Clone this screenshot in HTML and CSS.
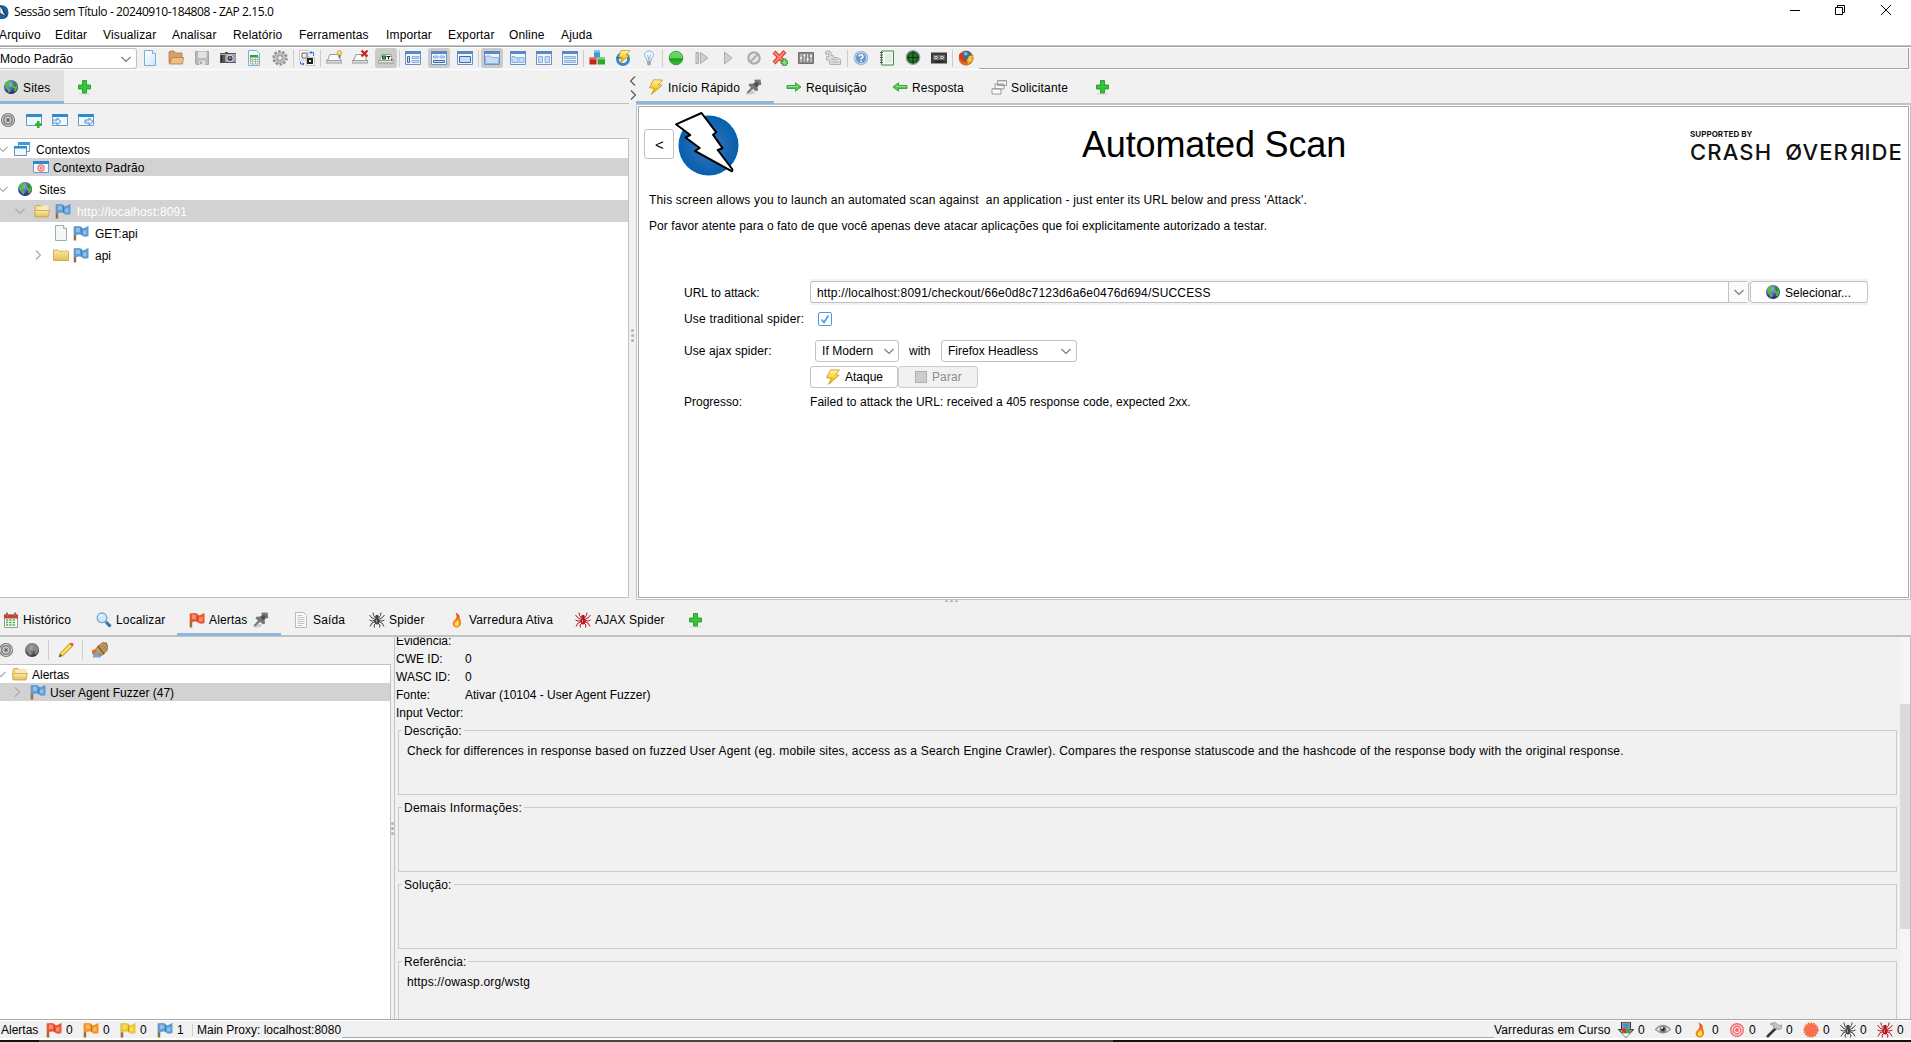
FILE: index.html
```html
<!DOCTYPE html>
<html lang="pt-BR">
<head>
<meta charset="utf-8">
<title>Sessão sem Título - 20240910-184808 - ZAP 2.15.0</title>
<link rel="stylesheet" href="styles.css">
</head>
<body>
<svg class="defs" aria-hidden="true">
  <defs>
    <linearGradient id="gBolt" x1="0" y1="0" x2="0" y2="1"><stop offset="0" stop-color="#fff6b0"/><stop offset=".5" stop-color="#fbd22e"/><stop offset="1" stop-color="#e0a000"/></linearGradient>
    <linearGradient id="gGreen" x1="0" y1="0" x2="0" y2="1"><stop offset="0" stop-color="#6fd96f"/><stop offset=".5" stop-color="#5bd35b"/><stop offset=".55" stop-color="#1f9a1f"/><stop offset="1" stop-color="#3cbf3c"/></linearGradient>
    <linearGradient id="gFolder" x1="0" y1="0" x2="0" y2="1"><stop offset="0" stop-color="#fbeaa8"/><stop offset="1" stop-color="#e6bd55"/></linearGradient>
    <linearGradient id="gPage" x1="0" y1="0" x2="1" y2="1"><stop offset="0" stop-color="#fff"/><stop offset="1" stop-color="#cfe5fa"/></linearGradient>
    <linearGradient id="gFlame" x1="0" y1="0" x2="0" y2="1"><stop offset="0" stop-color="#e8391b"/><stop offset=".6" stop-color="#f88c1c"/><stop offset="1" stop-color="#ef7a10"/></linearGradient>
    <radialGradient id="gGlobe" cx=".4" cy=".3" r=".7"><stop offset="0" stop-color="#a8b0f4"/><stop offset=".6" stop-color="#4a4fb4"/><stop offset="1" stop-color="#23236e"/></radialGradient>
    <radialGradient id="gGray" cx=".4" cy=".3" r=".7"><stop offset="0" stop-color="#bbb"/><stop offset=".6" stop-color="#666"/><stop offset="1" stop-color="#333"/></radialGradient>
    <radialGradient id="gLogo" cx=".5" cy=".5" r=".5"><stop offset="0" stop-color="#3e74bb"/><stop offset="1" stop-color="#0560ae"/></radialGradient>
  </defs>
  <symbol id="globe" viewBox="0 0 16 16"><circle cx="8" cy="8" r="7" fill="url(#gGlobe)"/><path d="M2 5Q4 1.5 7.5 1.2L8 3 6.5 4 7 6 4.5 7.5 6 9.5 8 10.5 7 13 5.5 13.5Q5 10 2.5 9ZM9.5 2Q14 3.5 14.6 7.5L13 12 11 12.5 11.5 9.5 9 8 9.5 5.5 11.5 5Z" fill="#4ec13c"/><path d="M10 2.500Q13.500 4 14 7L12 8 10.500 6.500Z" fill="#2d8f28"/></symbol>
  <symbol id="globegray" viewBox="0 0 16 16"><circle cx="8" cy="8" r="7" fill="url(#gGray)"/><path d="M2 5Q4 1.500 7.500 1.200L8 3 6.500 4 7 6 4.500 7.500 6 9.500 8 10.500 7 13 5.500 13.500Q5 10 2.500 9ZM9.500 2Q14 3.500 14.600 7.500L13 12 11 12.500 11.500 9.500 9 8 9.500 5.500Z" fill="#8a8a8a"/></symbol>
  <symbol id="plus" viewBox="0 0 16 16"><path d="M3 15h11" stroke="#cfcfcf"/><path d="M6.500 1.500h4v4.500h4v4h-4v4h-4v-4h-4v-4h4z" fill="#35c435" stroke="#139520" stroke-width=".8"/></symbol>
  <symbol id="bolt" viewBox="0 0 16 16"><path d="M5.500 .8L14.500 1 10.500 5.800 14.200 6.200 3.500 15.300 6.500 9.300 1.600 8.800Z" fill="url(#gBolt)" stroke="#c98f10" stroke-width=".8"/></symbol>
  <symbol id="pin" viewBox="0 0 16 16"><path d="M0 15.500L1 12h7l1 2-4 1.500Z" fill="#ccc"/><path d="M8 .8l6.500-.3.8 5.500-2 .3-1.800 1.700.7 3.500-2.200.8-3-2.300-4.500 4-1.500.2.300-1.500L5 8.500 2.500 6.500 3.300 4.800l4-.3L9 2.800Z" fill="#777"/><path d="M7.500 5.500l3-2.500 2.200 1.200-2 4Z" fill="#4c4c4c"/></symbol>
  <symbol id="right" viewBox="0 0 16 16"><path d="M1 6.500h8.500V3.800L15 8l-5.500 4.200V9.500H1z" fill="#50c650" stroke="#289828" stroke-width=".8"/><path d="M2 7.500h10" stroke="#9ae89a" stroke-width=".8"/></symbol>
  <symbol id="left" viewBox="0 0 16 16"><path d="M15 6.500H6.500V3.800L1 8l5.500 4.200V9.500H15z" fill="#50c650" stroke="#289828" stroke-width=".8"/><path d="M4 7.500h10" stroke="#9ae89a" stroke-width=".8"/></symbol>
  <symbol id="stack" viewBox="0 0 16 16"><g fill="#fafafa" stroke="#9a9a9a"><path d="M6.500 1.500h9v5h-9zM4 5h9v5H4zM1 9.500h9v5.500H1z"/></g><path d="M6.500 2h9M4 5.500h9M1 10h9" stroke="#aaa"/></symbol>
  <symbol id="target" viewBox="0 0 16 16"><circle cx="8" cy="8" r="7" fill="#777"/><circle cx="8" cy="8" r="5.500" fill="#777" stroke="#ddd"/><circle cx="8" cy="8" r="3.200" fill="#999" stroke="#e4e4e4"/><circle cx="8" cy="8" r="1" fill="#555"/></symbol>
  <symbol id="targetred" viewBox="0 0 16 16"><circle cx="8" cy="8" r="7" fill="#ef6d70"/><circle cx="8" cy="8" r="5" fill="none" stroke="#ffd5d5" stroke-width="1.200"/><circle cx="8" cy="8" r="2.500" fill="none" stroke="#ffe5e5" stroke-width="1.200"/></symbol>
  <symbol id="win" viewBox="0 0 16 16"><path d="M.5 2.500h15v11H.5z" fill="#f0f7fd" stroke="#6a9cc8"/><path d="M0 2h16v3H0z" fill="#2d8bd0"/></symbol>
  <symbol id="winadd" viewBox="0 0 16 16"><use href="#win"/><path d="M11 9h2.500v2.200H16v2.600h-2.500V16H11v-2.200H9v-2.600h2z" fill="#2eb135"/></symbol>
  <symbol id="winin" viewBox="0 0 16 16"><use href="#win"/><path d="M1 8h4V6l4 3.500L5 13v-2H1" fill="#d7ebfb" stroke="#5990bd"/></symbol>
  <symbol id="winout" viewBox="0 0 16 16"><use href="#win"/><path d="M7 8h4V6l4 3.500L11 13v-2H7z" fill="#d7ebfb" stroke="#5990bd"/></symbol>
  <symbol id="wins" viewBox="0 0 16 16"><path d="M4.500 1.500h11v9h-11z" fill="#fff" stroke="#65a0d0"/><path d="M4 1h12v3H4z" fill="#3b9add"/><path d="M.5 5.500h12v9H.5z" fill="#f3f8fc" stroke="#6d91b1"/><path d="M0 5h13v2.500H0z" fill="#2d8bd0"/></symbol>
  <symbol id="context" viewBox="0 0 16 16"><use href="#win"/><circle cx="8" cy="9" r="3.700" fill="#f27779"/><circle cx="8" cy="9" r="2" fill="none" stroke="#ffe3e3"/></symbol>
  <symbol id="folderopen" viewBox="0 0 16 16"><path d="M1 14V3.500L2 2.500h4L7 4h7v4" fill="#f5dc8b" stroke="#c89a3c" stroke-width=".8"/><path d="M10 2.500h4.500V8H4V4.500Z" fill="#f8e9bb"/><path d="M.5 7.500h15L14 14H1.500z" fill="url(#gFolder)" stroke="#cba040" stroke-width=".8"/></symbol>
  <symbol id="folder" viewBox="0 0 16 16"><path d="M.5 13.500V3h5L7 4.500h8.500v9z" fill="url(#gFolder)" stroke="#cba040" stroke-width=".8"/><path d="M8 3h6v1.500H9z" fill="#fff" stroke="#d9bc72" stroke-width=".5"/></symbol>
  <symbol id="flagshape" viewBox="0 0 16 16"><path d="M.7 1.500h2.500V15.500H.7z" fill="#9b6b3e"/><path d="M1 1.800Q5 .2 8 1.500L9 3Q12 3.500 13 2L15.500 1V11Q12 12.500 9.500 11L8.500 9.800Q5 9 2.500 10.500H1Z" fill="currentColor"/><path d="M3 3Q5 2 7 3.500V7Q5 6.500 3 7.500ZM10 5.500Q12 6 13.500 4.500V9Q12 10 10 9Z" fill="#fff" opacity=".35"/><path d="M8 1.500l1 1.500v8L8 9.500Z" opacity=".2"/></symbol>
  <symbol id="page" viewBox="0 0 16 16"><path d="M2.500 .5h8L13.500 3.500v12h-11z" fill="url(#gPage)" stroke="#79aede"/><path d="M10.500.5v3h3" fill="#fff" stroke="#79aede"/></symbol>
  <symbol id="pagegray" viewBox="0 0 16 16"><path d="M2.500 .5h8L13.500 3.500v12h-11z" fill="#f4f9f7" stroke="#9eb0ac"/><path d="M10.500.5v3h3" fill="#fff" stroke="#9eb0ac"/></symbol>
  <symbol id="pagetext" viewBox="0 0 16 16"><path d="M2.500 .5h8L13.500 3.500v12h-11z" fill="#fafafa" stroke="#bbb"/><path d="M4.500 3.500h5M4.500 5.500h7M4.500 7.500h7M4.500 9.500h7M4.500 11.500h7M4.500 13.500h5" stroke="#c4c4c4"/></symbol>
  <symbol id="open" viewBox="0 0 16 16"><path d="M1 13V2.500L2 1h4l1.500 2H14v9" fill="#d9a066" stroke="#a87a4a" stroke-width=".8"/><path d="M1.500 14L4 7.500h11.500L14.500 14z" fill="#edbd88" stroke="#b07a42" stroke-width=".8"/></symbol>
  <symbol id="save" viewBox="0 0 16 16"><path d="M1.500 1.500h13v13h-12l-1-1z" fill="#b9b9b9" stroke="#a5a5a5"/><path d="M4 1.500h8.500V8H4z" fill="#e2e2e2"/><path d="M5 10.500h6.500V15H5z" fill="#dedede"/><path d="M6 11.500h2V14H6z" fill="#aaa"/></symbol>
  <symbol id="camera" viewBox="0 0 16 16"><path d="M0 3h5V2h3v1h8v10H0z" fill="#555"/><path d="M0 4.500h16" stroke="#aaa"/><path d="M5 5h11v7H5z" fill="#9c9c9c"/><circle cx="10" cy="8.300" r="3.600" fill="#ddd"/><circle cx="10" cy="8.300" r="2.600" fill="#35406d"/><circle cx="10" cy="8" r="1" fill="#9ab"/><path d="M1.500 5v7" stroke="#222"/></symbol>
  <symbol id="sheet" viewBox="0 0 16 16"><path d="M2.500 .5h8L13.500 3.500v12h-11z" fill="#f8fbff" stroke="#79aede"/><path d="M4.500 6h7.500v8H4.500z" fill="#fff" stroke="#8aa88a" stroke-width=".8"/><path d="M4 5h8v2.500H4z" fill="#2fa42f"/><path d="M4 9.500h8M4 11.500h8M6.500 7v7M9.500 7v7" stroke="#93b593" stroke-width=".8"/></symbol>
  <symbol id="gear" viewBox="0 0 16 16"><circle cx="8" cy="8" r="6.600" fill="none" stroke="#8e8e8e" stroke-width="2.200" stroke-dasharray="2.500 1.650"/><circle cx="8" cy="8" r="4.200" fill="none" stroke="#8a8a8a" stroke-width="3"/><circle cx="8" cy="8" r="4.200" fill="none" stroke="#d0d0d0" stroke-width="1.600"/><circle cx="8" cy="8" r="2.300" fill="#f1f1f1" stroke="#888" stroke-width=".8"/></symbol>
  <symbol id="swap" viewBox="0 0 16 16"><path d="M.5.500h8.500v9.500H.5z" fill="#fff" stroke="#999" stroke-dasharray="1 1"/><path d="M3 3h5v5H3z" fill="#eee" stroke="#666"/><path d="M7.500 7.500h8v8h-8z" fill="#fff" stroke="#999" stroke-dasharray="1 1"/><path d="M8 8h6v6H8z" fill="#222"/><path d="M10 10h2v2h-2z" fill="#ddd"/><path d="M11 2.500h3.500V6M1.500 11.500V14H5M12.500 1L11 2.500 12.500 4M3.500 12.500L5 14 3.500 15.500" fill="none" stroke="#2a6de0"/></symbol>
  <symbol id="tray" viewBox="0 0 16 16"><path d="M1.500 10.500L4 4.500h9l1.500 6" fill="#fafafa" stroke="#999"/><path d="M0 10.500h16V13H0z" fill="#e0e0e0" stroke="#888" stroke-width=".8"/></symbol>
  <symbol id="traybulb" viewBox="0 0 16 16"><use href="#tray"/><circle cx="13.500" cy="3" r="2.500" fill="#f4d56e" stroke="#b99b33" stroke-width=".6"/><path d="M12.500 5h2v3h-2z" fill="#777"/></symbol>
  <symbol id="trayx" viewBox="0 0 16 16"><use href="#tray"/><path d="M9.500.5l6 6M15.500.5l-6 6" stroke="#cf2020" stroke-width="2.200"/></symbol>
  <symbol id="traytext" viewBox="0 0 16 16"><use href="#tray"/><path d="M4 5.500h4v4H4z" fill="#115a11"/><path d="M5 6.500h2v2H5z" fill="#22d022"/><path d="M8.500 6.500h4M10.500 6v3.500M13 9.500h1" stroke="#222" stroke-width="1.200"/></symbol>
  <symbol id="frame" viewBox="0 0 16 16"><path d="M.5 1.500h15v13H.5z" fill="#f1f6fd" stroke="#6d93c6"/><path d="M0 1h16v3H0z" fill="#5c88c8"/></symbol>
  <symbol id="lay1" viewBox="0 0 16 16"><use href="#frame"/><path d="M2.500 6.500h2v6h-2z" fill="#c6dcf7" stroke="#3e6cab"/><path d="M7 6.500h7v2H7zM7 10.500h7v2H7z" fill="#c6dcf7" stroke="#8eb2df"/></symbol>
  <symbol id="lay2" viewBox="0 0 16 16"><use href="#frame"/><path d="M2.500 6h4.500v2h-4.500zM9 6h4.500v2H9z" fill="#c6dcf7" stroke="#8eb2df"/><path d="M2.500 10.500h11v2h-11z" fill="#c6dcf7" stroke="#3e6cab"/></symbol>
  <symbol id="lay3" viewBox="0 0 16 16"><use href="#frame"/><path d="M2.500 6.500h11v6h-11z" fill="#c6dcf7" stroke="#3e6cab"/></symbol>
  <symbol id="lay4" viewBox="0 0 16 16"><use href="#frame"/><path d="M1.500 6h5l1 1.500h7v6h-13z" fill="#c6dcf7" stroke="#8eb2df"/></symbol>
  <symbol id="lay5" viewBox="0 0 16 16"><use href="#frame"/><path d="M2 6.500h3v1h3v5H2zM9 7.500h5v5H9z" fill="#c6dcf7" stroke="#8eb2df"/></symbol>
  <symbol id="lay6" viewBox="0 0 16 16"><use href="#frame"/><path d="M2.500 6.500h4v6h-4zM9 6.500h4.500v6H9z" fill="#c6dcf7" stroke="#8eb2df"/></symbol>
  <symbol id="lay7" viewBox="0 0 16 16"><use href="#frame"/><path d="M2.500 6.500h11v2h-11zM2.500 10.500h11v2h-11z" fill="#c6dcf7" stroke="#8eb2df"/></symbol>
  <symbol id="cubes" viewBox="0 0 16 16"><path d="M5 .500h6v7H5z" fill="#3d9ada"/><path d="M5 .500h6v2H5z" fill="#7cc4f0"/><path d="M.5 7.500h7v7h-7z" fill="#c92222"/><path d="M.5 7.500h7v2h-7z" fill="#ee6a6a"/><path d="M8.500 7.500H16v7H8.500z" fill="#30a52f"/><path d="M8.500 7.500H16v2H8.500z" fill="#7fd67c"/></symbol>
  <symbol id="update" viewBox="0 0 16 16"><circle cx="8" cy="9" r="5.500" fill="none" stroke="#3a86c8" stroke-width="3"/><path d="M1 8l3-3 3 4Z" fill="#2a6fb3"/><path d="M6 .5h9l-4 4.500 3.500.5L5 13l2.500-5.500L3.500 7Z" fill="url(#gBolt)" stroke="#c98f10" stroke-width=".7"/></symbol>
  <symbol id="bulb" viewBox="0 0 16 16"><path d="M6 11Q6 9 4.500 7.500 3 5.500 3.700 3.500 5 .8 8 .8T12.300 3.500Q13 5.500 11.500 7.500 10 9 10 11Z" fill="#eaf5ff" stroke="#85b5e0"/><path d="M6 11h4v3.500L8.500 15.500h-1L6 14.500z" fill="#aaa"/><path d="M6.500 5l1.500 5 1.500-5" fill="none" stroke="#9bc"/></symbol>
  <symbol id="greenball" viewBox="0 0 16 16"><circle cx="8" cy="8" r="6.800" fill="url(#gGreen)" stroke="#2c8f2c" stroke-width=".8"/></symbol>
  <symbol id="step" viewBox="0 0 16 16"><path d="M2 2.500h2.500v11H2zM6.500 2.500L14 8l-7.500 5.500z" fill="#cfcfcf" stroke="#ababab"/></symbol>
  <symbol id="play" viewBox="0 0 16 16"><path d="M4.500 2L12 8l-7.500 6z" fill="#cfcfcf" stroke="#ababab"/></symbol>
  <symbol id="drop" viewBox="0 0 16 16"><circle cx="8" cy="8" r="5.700" fill="#e6e6e6" stroke="#adadad" stroke-width="2.200"/><path d="M4.500 11.500l7-7" stroke="#adadad" stroke-width="2"/></symbol>
  <symbol id="breakadd" viewBox="0 0 16 16"><path d="M2 2l10.500 10.500M13 1.500L2 13" stroke="#d8372a" stroke-width="4"/><path d="M2.500 2.500l9.500 9.500M12.500 2L2.500 12.500" stroke="#ff8671" stroke-width="2"/><path d="M11 9h3v2.200H16v2.600h-2V16h-3v-2.200H9v-2.600h2z" fill="#7fe36e" stroke="#147c18" stroke-width=".8"/></symbol>
  <symbol id="mixer" viewBox="0 0 16 16"><path d="M.5 2.500h15v11H.5z" fill="#8a8a8a" stroke="#6f6f6f"/><path d="M3 4v8M6.300 4v8M9.600 4v8M13 4v8" stroke="#ddd"/><path d="M2 8h2M5.300 5.500h2M8.600 9.500h2M12 6h2" stroke="#fff" stroke-width="1.500"/></symbol>
  <symbol id="hand" viewBox="0 0 16 16"><path d="M0 3.500Q0 .8 3 .8T6 3V5.500H8.500V7.500h4L15.500 9.500v5H5l-1-4.500H1.500V6.500H3.500V3.500H1.500V5Z" fill="#dcdcdc" stroke="#b0b0b0"/><path d="M6 9.500h6M6.500 12h7" stroke="#b5b5b5"/></symbol>
  <symbol id="help" viewBox="0 0 16 16"><circle cx="8" cy="8" r="6.700" fill="#6a94cc" stroke="#a9bedb" stroke-width="1.200"/><circle cx="8" cy="8" r="5.500" fill="none" stroke="#dfeaf8" stroke-width=".8"/><path d="M6 6.500Q6.200 4.700 8 4.700t2 1.700Q10 7.400 8.200 8.500V9.500" fill="none" stroke="#fff" stroke-width="1.500"/><circle cx="8.100" cy="11.300" r=".9" fill="#fff"/></symbol>
  <symbol id="note" viewBox="0 0 16 16"><path d="M2.500 1h12v14h-12z" fill="#f4fbf4" stroke="#3c8f4a"/><path d="M6 4h7M6 6h7M6 8h7M6 10h7M6 12h7" stroke="#cde3cd"/><path d="M1 2.500h3M1 5h3M1 7.500h3M1 10h3M1 12.500h3" stroke="#555"/></symbol>
  <symbol id="radar" viewBox="0 0 16 16"><circle cx="8" cy="7.500" r="6.700" fill="#164e1b" stroke="#999" stroke-width="1.400"/><circle cx="8" cy="7.500" r="4.500" fill="#1f7a28"/><path d="M8 1.500v12M2 7.500h12" stroke="#0c2c0e"/></symbol>
  <symbol id="tape" viewBox="0 0 16 16"><path d="M0 2.500h16v11H0z" fill="#3c3c3c"/><path d="M2 5h12v5H2z" fill="#686868"/><circle cx="5" cy="7.500" r="1.700" fill="#eee"/><circle cx="11" cy="7.500" r="1.700" fill="#eee"/><circle cx="5" cy="7.500" r=".7"/><circle cx="11" cy="7.500" r=".7"/><path d="M4 12h8" stroke="#222" stroke-width="1.500"/></symbol>
  <symbol id="firefox" viewBox="0 0 16 16"><circle cx="8" cy="8" r="7.400" fill="#e0661a"/><circle cx="8.500" cy="6" r="5" fill="#2f6fb5"/><path d="M6 2Q9 2 10 4L7 6Z" fill="#7fc5ea"/><path d="M1 5Q2 3 3 2.500L4 4.500 7 5 6 7.500Q8 10.500 11 9.500 10 12.500 6 12 1 10 1 5Z" fill="#c9401a"/><path d="M11 6l4.500-.5-2 3.500h2L9 15.500l1.500-4H8.500Z" fill="#f8cc3c" stroke="#cf8d16" stroke-width=".6"/></symbol>
  <symbol id="calendar" viewBox="0 0 16 16"><path d="M1.500 3h13v12.500h-13z" fill="#fff" stroke="#999"/><path d="M1 2.500h14V6.500H1z" fill="#d9392e"/><path d="M4 .500v4M12 .500v4" stroke="#777" stroke-width="2"/><path d="M3 8h10M3 10.500h10M3 13h10" stroke="#44ad4a" stroke-width="1.600" stroke-dasharray="2.300 1"/></symbol>
  <symbol id="search" viewBox="0 0 16 16"><path d="M9 9l5.500 5.500" stroke="#7f93ab" stroke-width="3.400"/><path d="M10.500 10.500l4 4" stroke="#2b6fb8" stroke-width="2"/><circle cx="6" cy="5.800" r="4.800" fill="#cfe6fb" stroke="#7fa6d6" stroke-width="1.400"/><path d="M3.500 5Q4.500 3 7 3" fill="none" stroke="#fff" stroke-width="1.200"/></symbol>
  <symbol id="spider" viewBox="0 0 16 16"><g fill="none" stroke="currentColor" stroke-width="1"><path d="M6.500 6L4.500 3.500 4 .5M9.500 6L11.500 3.500 12 .5M6.500 7.500L3 6 .5 3M9.500 7.500l3.500-1.500 2.500-3M6.500 8.500L3 9 .5 8M9.500 8.500l3.500.5 2.500-1M6.500 9.500L3 11 1 14.500M9.500 9.500l3.500 1.500 2 3.500M7 11l-2 2 .5 2.500M9 11l2 2-.5 2.500"/></g><ellipse cx="8" cy="9" rx="2.400" ry="3.600" fill="currentColor"/><circle cx="8" cy="4.500" r="1.800" fill="currentColor"/><path d="M7.500 7.500v3" stroke="#fff" opacity=".5"/></symbol>
  <symbol id="flame" viewBox="0 0 16 16"><path d="M6.500 .5Q11.500 2.500 10.800 6.500 12.800 9 12 12 10.500 15.500 7.500 15.500 4 15 3.500 11.500 3.500 9 6.500 7 8.500 4.500 6.500 .5Z" fill="url(#gFlame)"/><path d="M8.500 7.500Q11 11 9.500 13.500 8 15 6.200 13.800 4.800 12 6.500 10 8.500 9.500 8.500 7.500Z" fill="#ffe14a"/></symbol>
  <symbol id="pencil" viewBox="0 0 16 16"><path d="M.8 15.200L2 11.500 4.500 14Z" fill="#444"/><path d="M2 11.500L11.500 1.800 14.300 4.500 4.500 14Z" fill="#f8d438" stroke="#ac8114" stroke-width=".8"/><path d="M11.500 1.800Q13 0 14.800 1.300T14.300 4.500Z" fill="#e5585b"/><path d="M3.500 12.500L13 3" stroke="#fff1a0"/></symbol>
  <symbol id="broom" viewBox="0 0 16 16"><path d="M0 8.500Q2 6.500 4 8.500L5 12H0Z" fill="#f06a35"/><path d="M1 11.500h8v4H1z" fill="#6fa7e0"/><path d="M10 1L12 0l.5 1.500L14.500.5v2L16 3v4.500l-4.500 5L9 13.500 2.500 8.500 6.500 3.500Z" fill="#c29a60" stroke="#8a6938" stroke-width=".7"/><path d="M6 4l6 8" stroke="#7a5728" stroke-width="1.300"/><path d="M9 5l5-4M11 7l4-4M12 9l3.500-3.500" stroke="#8f6b3b" stroke-width=".7"/></symbol>
  <symbol id="download" viewBox="0 0 16 16"><path d="M3.500 0h9v7.500h3.200L8 15.500.3 7.500h3.200z" fill="#999" stroke="#333"/><path d="M5.500 1.500h5v4.500h-5z" fill="#3e8fd6"/><path d="M3.500 6.500H8v4.500H5z" fill="#d03535"/><path d="M8.500 6.500H13l-2 4.500H8.500z" fill="#3ba33b"/><path d="M4 11.500h8L8 15.200Z" fill="#f4f4f4"/></symbol>
  <symbol id="eye" viewBox="0 0 16 16"><path d="M.5 7.500Q8-.5 15.500 7.500 8 14 .5 7.500Z" fill="#eee" stroke="#999" stroke-width="1.300"/><circle cx="8" cy="7.300" r="3.400" fill="#777"/><circle cx="8" cy="7.300" r="1.600" fill="#222"/><circle cx="7" cy="6" r="1" fill="#fff"/></symbol>
  <symbol id="hammer" viewBox="0 0 16 16"><path d="M1 15L10 6" stroke="#333" stroke-width="2.500"/><path d="M4.500 1.500L9 .5l4 3 2.500-.5V6.500L12.500 8 10.500 6 9 7 7 5 8.500 3.500 4.500 2.500Z" fill="#c6c6c6" stroke="#8a8a8a" stroke-width=".7"/></symbol>
  <symbol id="burst" viewBox="0 0 16 16"><circle cx="8" cy="8" r="6.500" fill="#f8714c"/><circle cx="8" cy="8" r="6.800" fill="none" stroke="#f4613a" stroke-width="1.600" stroke-dasharray="1.700 .9"/></symbol>
  <symbol id="down" viewBox="0 0 10 10"><path d="M.5 3L5 7.500 9.500 3" fill="none" stroke="currentColor" stroke-width="1.100"/></symbol>
  <symbol id="next" viewBox="0 0 10 10"><path d="M3 .5L7.500 5 3 9.500" fill="none" stroke="currentColor" stroke-width="1.100"/></symbol>
  <symbol id="prev" viewBox="0 0 10 10"><path d="M7 .5L2.500 5 7 9.500" fill="none" stroke="currentColor" stroke-width="1.100"/></symbol>
</svg>

<header class="titlebar">
  <svg class="appicon" viewBox="0 0 9 16"><path d="M0 1Q8.500 1 8.500 8.500T0 15Z" fill="#1460a8"/><path d="M1 3L6.500 12.500M0 4l3 6" stroke="#111" stroke-width=".8"/><path d="M0 2l2.500 3.500 1 3L6.500 12.500 0 9Z" fill="#fff" stroke="#111" stroke-width=".5"/></svg>
  <span class="title">Sessão sem Título - 20240910-184808 - ZAP 2.15.0</span>
  <svg class="winctl" viewBox="0 0 104 12"><path d="M0 6.500h10M45.500 3.500h7v7h-7zM47.500 3.500v-2h7v7h-2M91 1l10 10M101 1L91 11" fill="none" stroke="#000"/></svg>
</header>
<nav class="menubar">
  <span class="m1">Arquivo</span><span class="m2">Editar</span><span class="m3">Visualizar</span><span class="m4">Analisar</span><span class="m5">Relatório</span><span class="m6">Ferramentas</span><span class="m7">Importar</span><span class="m8">Exportar</span><span class="m9">Online</span><span>Ajuda</span>
</nav>
<div class="toolbar">
  <div class="combo mode"><span>Modo Padrão</span><svg class="ch"><use href="#down"/></svg></div>
  <b><svg><use href="#page"/></svg></b><b><svg><use href="#open"/></svg></b><b><svg><use href="#save"/></svg></b><b><svg><use href="#camera"/></svg></b><b><svg><use href="#sheet"/></svg></b><b><svg><use href="#gear"/></svg></b><i></i>
  <b><svg><use href="#swap"/></svg></b><i></i>
  <b><svg><use href="#traybulb"/></svg></b><b><svg><use href="#trayx"/></svg></b><b class="on"><svg><use href="#traytext"/></svg></b><i></i>
  <b><svg><use href="#lay1"/></svg></b><b class="on"><svg><use href="#lay2"/></svg></b><b><svg><use href="#lay3"/></svg></b><i></i>
  <b class="on"><svg><use href="#lay4"/></svg></b><b><svg><use href="#lay5"/></svg></b><b><svg><use href="#lay6"/></svg></b><b><svg><use href="#lay7"/></svg></b><i></i>
  <b><svg><use href="#cubes"/></svg></b><b><svg><use href="#update"/></svg></b><b><svg><use href="#bulb"/></svg></b><i></i>
  <b><svg><use href="#greenball"/></svg></b><b><svg><use href="#step"/></svg></b><b><svg><use href="#play"/></svg></b><b><svg><use href="#drop"/></svg></b><b><svg><use href="#breakadd"/></svg></b><b><svg><use href="#mixer"/></svg></b><b class="wide"><svg><use href="#hand"/></svg></b><i></i>
  <b><svg><use href="#help"/></svg></b><b><svg><use href="#note"/></svg></b><b><svg><use href="#radar"/></svg></b><b><svg><use href="#tape"/></svg></b><i></i>
  <b><svg><use href="#firefox"/></svg></b>
  <div class="rest"></div>
</div>

<main class="upper">
  <section class="sites">
    <div class="tabs">
      <div class="tab first sel shade"><svg><use href="#globe"/></svg><span class="sw">Sites</span></div>
      <div class="tab"><svg><use href="#plus"/></svg></div>
    </div>
    <div class="minibar"><svg><use href="#target"/></svg><svg><use href="#winadd"/></svg><svg><use href="#winin"/></svg><svg><use href="#winout"/></svg></div>
    <div class="tree">
      <div class="row r1"><svg class="ch"><use href="#down"/></svg><svg class="ic"><use href="#wins"/></svg><span>Contextos</span></div>
      <div class="row r2 hl"><svg class="ic"><use href="#context"/></svg><span>Contexto Padrão</span></div>
      <div class="row tall r3"><svg class="ch"><use href="#down"/></svg><svg class="ic"><use href="#globe"/></svg><span>Sites</span></div>
      <div class="row tall r4 hl"><svg class="ch"><use href="#down"/></svg><svg class="ic"><use href="#folderopen"/></svg><svg class="ic flag blue"><use href="#flagshape"/></svg><span>http://localhost:8091</span></div>
      <div class="row tall r5"><svg class="ic"><use href="#pagegray"/></svg><svg class="ic flag blue"><use href="#flagshape"/></svg><span>GET:api</span></div>
      <div class="row tall r6"><svg class="ch"><use href="#next"/></svg><svg class="ic"><use href="#folder"/></svg><svg class="ic flag blue"><use href="#flagshape"/></svg><span>api</span></div>
    </div>
  </section>
  <div class="split">
    <svg class="ch"><use href="#prev"/></svg><svg class="ch"><use href="#next"/></svg>
    <div class="dots"><u></u><u></u><u></u></div>
  </div>
  <section class="work">
    <div class="tabs">
      <div class="tab sel"><svg><use href="#bolt"/></svg><span class="tw1">Início Rápido</span><svg class="pin"><use href="#pin"/></svg></div>
      <div class="tab"><svg><use href="#right"/></svg><span class="tw2">Requisição</span></div>
      <div class="tab"><svg><use href="#left"/></svg><span class="tw3">Resposta</span></div>
      <div class="tab"><svg><use href="#stack"/></svg><span class="tw4">Solicitante</span></div>
      <div class="tab"><svg><use href="#plus"/></svg></div>
    </div>
    <div class="frame"><div class="scan">
      <div class="head">
        <button class="back">&lt;</button>
        <svg class="logo" viewBox="673 110 66 68"><circle cx="707.500" cy="145.500" r="30" fill="url(#gLogo)"/><path d="M675 124.300L700.500 113 715.300 132.300 712 134.700 721.700 148.300 716.700 150 731.500 169.500 731 171.300 694 151 698.700 148 684.500 137.500 689.300 135Z" fill="#fff" stroke="#000" stroke-width="2" stroke-linejoin="round"/></svg>
        <h1>Automated Scan</h1>
        <div class="sponsor"><small>SUPPORTED BY</small><div class="brand"><span>CRASH</span><span>ØVER<em>R</em>IDE</span></div></div>
      </div>
      <p class="intro1">This screen allows you to launch an automated scan against&nbsp; an application - just enter its URL below and press 'Attack'.</p>
      <p class="intro2">Por favor atente para o fato de que você apenas deve atacar aplicações que foi explicitamente autorizado a testar.</p>
      <div class="form">
        <label class="l1">URL to attack:</label>
        <div class="urlline"><div class="combo url"><span>http://localhost:8091/checkout/66e0d8c7123d6a6e0476d694/SUCCESS</span><svg class="ch"><use href="#down"/></svg></div><button class="select"><svg><use href="#globe"/></svg><span>Selecionar...</span></button></div>
        <label class="l2">Use traditional spider:</label>
        <div><svg class="check" viewBox="0 0 14 14"><rect x=".5" y=".5" width="13" height="13" rx="1.500" fill="#fff" stroke="#4a9be6"/><path d="M3.500 7.500L6 10.500 10.500 3.500" fill="none" stroke="#4a95dd" stroke-width="1.600"/></svg></div>
        <label class="l3">Use ajax spider:</label>
        <div class="ajax"><div class="combo modern"><span>If Modern</span><svg class="ch"><use href="#down"/></svg></div><span class="with">with</span><div class="combo headless"><span>Firefox Headless</span><svg class="ch"><use href="#down"/></svg></div></div>
        <span></span>
        <div class="actions"><button class="attack"><svg><use href="#bolt"/></svg>Ataque</button><button class="stop" disabled><u></u>Parar</button></div>
        <label class="l4">Progresso:</label>
        <div class="fail">Failed to attack the URL: received a 405 response code, expected 2xx.</div>
      </div>
    </div></div>
  </section>
</main>
<div class="hsplit"><u></u><u></u><u></u></div>

<section class="lower">
  <div class="tabs">
    <div class="tab first"><svg><use href="#calendar"/></svg><span class="bw1">Histórico</span></div>
    <div class="tab"><svg><use href="#search"/></svg><span class="bw2">Localizar</span></div>
    <div class="tab sel"><svg class="red"><use href="#flagshape"/></svg><span class="bw3">Alertas</span><svg class="pin"><use href="#pin"/></svg></div>
    <div class="tab"><svg><use href="#pagetext"/></svg><span class="bw4">Saída</span></div>
    <div class="tab"><svg class="dark"><use href="#spider"/></svg><span class="bw5">Spider</span></div>
    <div class="tab"><svg><use href="#flame"/></svg><span class="bw6">Varredura Ativa</span></div>
    <div class="tab"><svg class="crimson"><use href="#spider"/></svg><span class="bw7">AJAX Spider</span></div>
    <div class="tab"><svg><use href="#plus"/></svg></div>
  </div>
  <div class="panes">
    <div class="alerts">
      <div class="minibar"><svg><use href="#target"/></svg><svg><use href="#globegray"/></svg><i></i><svg><use href="#pencil"/></svg><i></i><svg><use href="#broom"/></svg></div>
      <div class="tree">
        <div class="row a1"><svg class="ch"><use href="#down"/></svg><svg class="ic"><use href="#folderopen"/></svg><span>Alertas</span></div>
        <div class="row a2 hl"><svg class="ch"><use href="#next"/></svg><svg class="ic blue"><use href="#flagshape"/></svg><span>User Agent Fuzzer (47)</span></div>
      </div>
      <div class="grip"><u></u><u></u><u></u></div>
    </div>
    <div class="detail">
      <div class="info">
        <dl>
          <dt>Evidência:</dt><dd></dd>
          <dt>CWE ID:</dt><dd>0</dd>
          <dt>WASC ID:</dt><dd>0</dd>
          <dt>Fonte:</dt><dd>Ativar (10104 - User Agent Fuzzer)</dd>
          <dt>Input Vector:</dt><dd></dd>
        </dl>
        <div class="box"><span class="legend">Descrição:</span><p class="desc">Check for differences in response based on fuzzed User Agent (eg. mobile sites, access as a Search Engine Crawler). Compares the response statuscode and the hashcode of the response body with the original response.</p></div>
        <div class="box"><span class="legend lg2">Demais Informações:</span></div>
        <div class="box"><span class="legend">Solução:</span></div>
        <div class="box"><span class="legend">Referência:</span><p>https://owasp.org/wstg</p></div>
      </div>
      <div class="scroll"><div class="thumb"></div></div>
    </div>
  </div>
</section>

<footer class="status">
  <span class="lead">Alertas</span>
  <span class="cnt"><svg class="red"><use href="#flagshape"/></svg>0</span><span class="cnt"><svg class="orange"><use href="#flagshape"/></svg>0</span><span class="cnt"><svg class="yellow"><use href="#flagshape"/></svg>0</span><span class="cnt"><svg class="blue"><use href="#flagshape"/></svg>1</span>
  <i></i><span class="proxy">Main Proxy: localhost:8080</span>
  <div class="fill"></div>
  <span class="scans">Varreduras em Curso</span>
  <span class="cnt"><svg><use href="#download"/></svg>0</span><span class="cnt"><svg><use href="#eye"/></svg>0</span><span class="cnt"><svg><use href="#flame"/></svg>0</span><span class="cnt"><svg><use href="#targetred"/></svg>0</span><span class="cnt"><svg><use href="#hammer"/></svg>0</span><span class="cnt"><svg><use href="#burst"/></svg>0</span><span class="cnt"><svg class="dark"><use href="#spider"/></svg>0</span><span class="cnt"><svg class="crimson"><use href="#spider"/></svg>0</span>
</footer>
<div class="taskedge"></div>
</body>
</html>
```
FILE: styles.css
```css
* { box-sizing: border-box; }
html, body { margin: 0; height: 1042px; overflow: hidden; }
body { background: #fff; color: #000; font: 12px/18px "Liberation Sans", Arial, sans-serif; display: flex; flex-direction: column; width: 1911px; white-space: nowrap; }
.defs { position: absolute; width: 0; height: 0; }
svg { width: 16px; height: 16px; flex: none; display: block; }
svg.ch { width: 10px; height: 10px; color: #777; }
button { font: inherit; color: inherit; margin: 0; padding: 0; background: #fff; border: 1px solid #c2c2c2; border-radius: 3px; display: flex; align-items: center; }
p, h1, dl, dd { margin: 0; }
u { display: block; text-decoration: none; width: 3px; height: 3px; border-radius: 2px; background: #b4b4b4; }
.blue { color: #5a9bd8; } .red { color: #f2542f; } .orange { color: #f8941a; } .yellow { color: #f0c828; } .dark { color: #444; } .crimson { color: #b8141c; }

.titlebar { height: 23px; flex: none; display: flex; align-items: center; font-family: "Open Sans", "Noto Sans", sans-serif; }
.titlebar .appicon { width: 9px; height: 16px; margin-right: 5px; }
.title { letter-spacing: -.4px; flex: 1; }
.winctl { width: 104px; height: 12px; margin: -3px 17px 0 0; }
.menubar { height: 22px; flex: none; display: flex; align-items: center; padding-top: 1px; }
.menubar span { flex: none; letter-spacing: .15px; }
.m1 { width: 56px; margin-left: -1px; } .m2 { width: 48px; } .m3 { width: 69px; } .m4 { width: 61px; } .m5 { width: 66px; } .m6 { width: 87px; } .m7 { width: 62px; } .m8 { width: 61px; } .m9 { width: 52px; }

.toolbar { height: 25px; flex: none; border-top: 1px solid #cacaca; display: flex; padding: 2px 0 1px; background: linear-gradient(#a2a2a2 1px, #fff 1px 2px, #f1f1f1 2px 23px, #fff 23px); }
.toolbar b { width: 22px; height: 20px; margin: 0 2px; flex: none; display: flex; align-items: center; justify-content: center; border-radius: 3px; }
.toolbar b.on { background: #cbcbcb; }
.toolbar b.wide { width: 23px; margin-right: 3px; }
i { width: 1px; background: #cdcdcd; flex: none; }
.toolbar i { height: 17px; margin-top: 2px; }
.rest { flex: 1; border-bottom: 1px solid #a2a2a2; border-right: 1px solid #a2a2a2; margin-right: 2px; height: 21px; }
.combo { display: flex; align-items: center; justify-content: space-between; background: #fff; border: 1px solid #c2c2c2; border-radius: 3px; height: 22px; padding: 0 5px 0 6px; }
.combo.mode { width: 137px; height: 21px; flex: none; border-left: 0; border-radius: 0 3px 3px 0; padding: 0 5px 0 0; letter-spacing: .1px; }

.upper { height: 530px; flex: none; display: flex; background: #f1f1f1; }
.tabs { display: flex; height: 34px; flex: none; border-bottom: 1px solid #c2c2c2; background: #f1f1f1; letter-spacing: .15px; }
.tab { display: flex; align-items: center; padding: 0 12px; gap: 4px; height: 34px; flex: none; }
.tab.first { padding-left: 3px; }
.tab span { flex: none; padding-top: 1px; }
.tab.sel { border-bottom: 3px solid #90b6de; padding-top: 3px; }
.tab.shade { background: #e0e0e0; }
.pin { margin-left: 2px; }
.sw { width: 29px; } .tw1 { width: 72px; } .tw2 { width: 62px; } .tw3 { width: 55px; } .tw4 { width: 59px; }
.bw1, .bw2 { width: 49px; } .bw3 { width: 38px; } .bw4 { width: 32px; } .bw5 { width: 36px; } .bw6 { width: 82px; } .bw7 { width: 68px; }
.sites { width: 629px; display: flex; flex-direction: column; padding-bottom: 2px; }
.minibar { height: 34px; flex: none; display: flex; align-items: center; gap: 10px; }
.sites .minibar { padding-bottom: 2px; }
.tree { flex: 1; background: #fff; border: 1px solid #c2c2c2; border-left: 0; padding-top: 1px; }
.row { height: 18px; display: flex; align-items: center; }
.row span { padding-top: 1px; }
.row.tall { height: 22px; }
.row .ch { color: #aaa; margin-right: 6px; }
.row .ic { margin-right: 5px; }
.hl { background: #d2d2d2; }
.r1 .ch { margin-left: -2px; } .r1 .ic { margin-right: 6px; } .r2 { padding-left: 33px; letter-spacing: .1px; } .r2 .ic { margin-right: 4px; }
.r3 { margin-top: 2px; } .r3 .ch { margin: 0 9px 0 -2px; } .r3 .ic { margin-right: 6px; }
.r4 { padding-left: 15px; color: #fff; letter-spacing: .13px; } .r4 .ch { margin-right: 9px; } .r5 { padding-left: 53px; } .r6 { padding-left: 33px; } .r6 .ch { margin-right: 10px; }
.row.tall .flag { margin-right: 6px; } .r5 .ic, .r6 .ic { margin-right: 4px; }
.split { width: 7px; display: flex; flex-direction: column; align-items: center; gap: 4px; padding-top: 6px; }
.split .ch { color: #555; }
.dots { display: flex; flex-direction: column; gap: 2px; margin-top: 225px; }
.work { flex: 1; display: flex; flex-direction: column; min-width: 0; }
.work .tabs { height: 35px; border-bottom-width: 2px; }
.frame { flex: 1; border: 1px solid #c2c2c2; border-top: 0; background: #fff; padding: 1px; }
.scan { height: 100%; border: 1px solid #aaa; background: #fff; }
.head { display: flex; height: 72px; margin-left: 5px; align-items: flex-start; }
.back { width: 30px; height: 30px; margin-top: 22px; justify-content: center; font-size: 15px; padding: 1px 0 0 1px; }
.logo { width: 66px; height: 68px; margin: 3px 0 0 0; }
h1 { font-size: 36px; line-height: 40px; font-weight: 400; margin: 18px 0 0 342px; width: 608px; letter-spacing: -.15px; }
.sponsor { padding-top: 23px; color: #111; }
.sponsor small { display: block; font: 700 8px/8px Inter, sans-serif; height: 10px; letter-spacing: .05px; }
.brand { display: flex; justify-content: space-between; font: 500 22px/24px Inter, sans-serif; width: 213px; letter-spacing: 1.15px; }
.brand em { display: inline-block; transform: scaleX(-1); font-style: normal; }
.intro1, .intro2 { margin-left: 10px; }
.intro1 { margin-top: 12px; letter-spacing: .155px; } .intro2 { margin-top: 8px; letter-spacing: .085px; }
.form { display: grid; grid-template-columns: 126px 1fr; grid-template-rows: 26px 28px 32px 23px 27px; padding: 44px 40px 0 45px; align-items: center; }
.l2 { letter-spacing: .18px; } .l3 { padding-top: 3px; letter-spacing: .1px; } .l1 { padding-top: 1px; }
.urlline { display: flex; background: #f1f1f1; padding: 2px 0; gap: 1px; }
.url { flex: 1; padding: 0; }
.url span { padding: 1px 0 0 6px; letter-spacing: .17px; }
.url .ch { box-sizing: content-box; padding: 5px 4px 5px 5px; border-left: 1px solid #c2c2c2; background: #fafafa; }
.select { width: 118px; padding-left: 14px; gap: 4px; }
.select span { padding-top: 1px; }
.check { width: 14px; height: 14px; margin-left: 8px; }
.ajax { display: flex; align-items: center; padding: 4px 0 0 5px; }
.modern { width: 84px; padding-right: 4px; letter-spacing: .05px; } .headless { width: 136px; } .with { width: 42px; padding-left: 10px; }
.actions { display: flex; }
.actions button { height: 22px; }
.attack { width: 88px; padding-left: 14px; gap: 4px; }
.stop { width: 80px; padding-left: 16px; gap: 5px; background: #f1f1f1; color: #8c8c8c; border-color: #cdcdcd; letter-spacing: .1px; }
.stop u { width: 12px; height: 12px; border-radius: 0; background: #ccc; border: 1px solid #b0b0b0; }
.fail { letter-spacing: .055px; }

.hsplit { height: 2px; flex: none; background: #f1f1f1; display: flex; gap: 2px; justify-content: center; align-items: center; padding-right: 8px; }
.lower { height: 417px; flex: none; display: flex; flex-direction: column; background: #f1f1f1; }
.lower .tabs { height: 35px; border-bottom-width: 2px; }
.lower .tab { padding-top: 1px; }
.lower .tab.sel { padding-top: 4px; }
.panes { flex: 1; display: flex; min-height: 0; }
.alerts { width: 394px; display: grid; grid-template-columns: 391px 3px; grid-template-rows: 27px 1fr; }
.alerts .minibar { height: 27px; grid-column: 1 / 3; margin-left: -2px; padding-bottom: 1px; }
.alerts .minibar i { height: 20px; margin: 0 -2px; }
.alerts .minibar i + svg { margin-left: 1px; }
.alerts .tree { border-bottom: 0; padding-top: 0; }
.a1 .ch { margin: 0 6px 0 -4px; } .a1 .ic { margin-right: 4px; } .a2 .ch { margin: 0 8px 0 12px; } .a2 .ic { margin-right: 4px; }
.grip { display: flex; flex-direction: column; gap: 2px; padding-top: 158px; }
.detail { flex: 1; display: flex; border-left: 1px solid #c2c2c2; border-right: 1px solid #c2c2c2; overflow: hidden; min-width: 0; }
.info { flex: 1; min-width: 0; padding-right: 3px; margin-top: -5px; }
dl { display: grid; grid-template-columns: 69px 1fr; grid-auto-rows: 18px; padding-left: 1px; margin-bottom: 8px; }
.box { margin: 0 0 12px 3px; height: 65px; border: 1px solid #cbcbcb; padding-left: 8px; }
.legend { display: block; width: max-content; background: #f1f1f1; line-height: 18px; height: 18px; padding: 0 2px; margin: -9px 0 0 -5px; letter-spacing: .1px; }
.lg2 { letter-spacing: .25px; }
.box p { margin-top: 2px; letter-spacing: .17px; }
.box .desc { letter-spacing: .185px; }
.scroll { width: 10px; background: #f5f5f5; padding-top: 67px; }
.thumb { height: 225px; background: #dbdbdb; }

.status { height: 19px; flex: none; background: linear-gradient(#aaa 1px, #fff 1px 2px, #f1f1f1 2px); display: flex; padding: 3px 0 0 1px; align-items: stretch; line-height: 17px; }
.status .lead { width: 45px; }
.cnt { width: 37px; display: flex; gap: 4px; flex: none; }
.status i { height: 12px; margin: 2px 4px 0 -2px; }
.proxy { width: 145px; }
.fill { flex: 1; border-bottom: 1px solid #aaa; }
.scans { width: 124px; letter-spacing: .15px; }
.status .cnt:last-child { width: 34px; }
.taskedge { flex: 1; border-top: 2px solid #fff; background: linear-gradient(90deg, #111 39px, #444 39px 1113px, #111 1113px); }
```
